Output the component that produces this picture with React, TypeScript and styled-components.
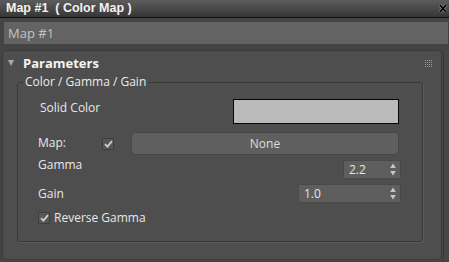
import styled, { createGlobalStyle } from "styled-components";

const GlobalStyle = createGlobalStyle`
  html, body {
    margin: 0;
    padding: 0;
    background: #444444;
  }
  body {
    font-family: "Open Sans", "Liberation Sans", sans-serif;
    font-size: 12px;
    color: #e4e4e4;
  }
`;

const Window = styled.div`
  width: 449px;
  height: 262px;
  display: flex;
  flex-direction: column;
  background: #444444;
  overflow: hidden;
`;

const TitleBar = styled.div`
  height: 17px;
  display: flex;
  align-items: center;
  padding: 0 2px 0 6px;
  background: linear-gradient(#5c5c5c, #363636);
  border-bottom: 1px solid #0e0e0e;
`;

const Title = styled.span`
  font-family: "Liberation Sans", Arial, sans-serif;
  font-weight: 700;
  font-size: 12.5px;
  line-height: 17px;
  color: #f2f2f2;
  white-space: pre;
`;

const CloseBtn = styled.span`
  margin-left: auto;
  display: flex;
  width: 8px;
  height: 9px;
`;

const NameField = styled.div`
  margin: 4px 1px 0 4px;
  height: 22px;
  padding-left: 4px;
  display: flex;
  align-items: center;
  background: #636363;
  font-size: 13px;
  color: #c4c4c4;
`;

const Body = styled.div`
  flex: 1;
  display: flex;
  margin-top: 6px;
`;

const Rollout = styled.div`
  width: 440px;
  margin: 0 0 2px 2px;
  box-sizing: border-box;
  background: #4e4e4e;
  border: 1px solid #3b3b3b;
  border-radius: 4px;
  display: flex;
  flex-direction: column;
`;

const Track = styled.div`
  flex: 1;
  margin-left: 1px;
  border-left: 1px solid #3a3a3a;
  background: #474747;
`;

const Header = styled.div`
  height: 24px;
  display: flex;
  align-items: center;
  padding: 0 9px 0 5px;
`;

const Arrow = styled.span`
  width: 0;
  height: 0;
  border-left: 3.5px solid transparent;
  border-right: 3.5px solid transparent;
  border-top: 6px solid #a8a8a8;
  margin: 0 9px 0 0;
`;

const HeaderTitle = styled.span`
  font-weight: 700;
  font-size: 13px;
  color: #f4f4f4;
`;

const Grip = styled.div`
  margin-left: auto;
  display: grid;
  grid-template-columns: repeat(4, 1px);
  grid-auto-rows: 1px;
  gap: 1px;
  & > i {
    background: #9c9c9c;
  }
`;

const Group = styled.fieldset`
  margin: 0 18px 0 14px;
  padding: 0;
  border: 1px solid #393939;
  border-radius: 3px;
  box-shadow: 1px 1px 0 #5c5c5c;
  min-width: 0;
`;

const Legend = styled.legend`
  margin-left: 5px;
  padding: 0 2px;
  line-height: 14px;
  font-size: 12px;
  color: #ececec;
`;

const GroupBody = styled.div`
  display: flex;
  flex-direction: column;
  padding: 10px 21px 16px 20px;
`;

const Row = styled.div<{ $h: number; $gap?: number }>`
  display: flex;
  align-items: center;
  height: ${(p) => p.$h}px;
  margin-top: ${(p) => p.$gap ?? 0}px;
`;

const Label = styled.span<{ $w?: number; $indent?: number; $top?: number }>`
  width: ${(p) => (p.$w ? `${p.$w}px` : "auto")};
  padding-left: ${(p) => p.$indent ?? 0}px;
  align-self: flex-start;
  margin-top: ${(p) => p.$top ?? 0}px;
  color: #e8e8e8;
  white-space: nowrap;
`;

const Swatch = styled.div`
  margin-left: auto;
  margin-right: 2px;
  width: 166px;
  height: 25px;
  box-sizing: border-box;
  background: #bababa;
  border: 1px solid #050505;
`;

const Check = styled.span`
  width: 12px;
  height: 12px;
  box-sizing: border-box;
  display: inline-flex;
  align-items: center;
  justify-content: center;
  background: #575757;
  border: 1px solid #3e3e3e;
`;

const Button = styled.div`
  margin-left: auto;
  margin-right: 2px;
  width: 268px;
  height: 23px;
  box-sizing: border-box;
  display: flex;
  align-items: center;
  justify-content: center;
  background: #5f5f5f;
  border: 1px solid #474747;
  border-radius: 4px;
  color: #dedede;
`;

const Spinner = styled.div<{ $w: number }>`
  margin-left: auto;
  width: ${(p) => p.$w}px;
  height: 19px;
  box-sizing: border-box;
  display: flex;
  align-items: center;
  padding: 0 4px 0 5px;
  background: #5e5e5e;
  border: 1px solid #494949;
  color: #e6e6e6;
`;

const SpinArrows = styled.svg`
  margin-left: auto;
`;

const CheckLabel = styled.span`
  margin-left: 4px;
  color: #e8e8e8;
`;

const Tick = () => (
  <svg width="9" height="8" viewBox="0 0 9 8">
    <path d="M1 4.2 L3.4 6.6 L8 1.2" fill="none" stroke="#cfcfcf" strokeWidth="1.8" />
  </svg>
);

const Arrows = () => (
  <SpinArrows width="6" height="13" viewBox="0 0 6 13">
    <path d="M3 0.5 L5.8 5 L0.2 5 Z" fill="#c8c8c8" />
    <path d="M3 12.5 L5.8 8 L0.2 8 Z" fill="#c8c8c8" />
  </SpinArrows>
);

export default function App() {
  return (
    <>
      <GlobalStyle />
      <Window>
        <TitleBar>
          <Title>{"Map #1  ( Color Map )"}</Title>
          <CloseBtn>
            <svg width="8" height="9" viewBox="0 0 8 9">
              <path d="M1 1 L7 8 M7 1 L1 8" stroke="#8a8a8a" strokeWidth="3" />
              <path d="M1 1 L7 8 M7 1 L1 8" stroke="#050505" strokeWidth="1.8" />
            </svg>
          </CloseBtn>
        </TitleBar>
        <NameField>Map #1</NameField>
        <Body>
          <Rollout>
            <Header>
              <Arrow />
              <HeaderTitle>Parameters</HeaderTitle>
              <Grip>
                {Array.from({ length: 16 }).map((_, i) => (
                  <i key={i} />
                ))}
              </Grip>
            </Header>
            <Group>
              <Legend>Color / Gamma / Gain</Legend>
              <GroupBody>
                <Row $h={25}>
                  <Label $indent={2}>Solid Color</Label>
                  <Swatch />
                </Row>
                <Row $h={23} $gap={8}>
                  <Label $w={64} $top={2}>Map:</Label>
                  <Check>
                    <Tick />
                  </Check>
                  <Button>None</Button>
                </Row>
                <Row $h={19} $gap={5}>
                  <Label $top={-4}>Gamma</Label>
                  <Spinner $w={58}>
                    2.2
                    <Arrows />
                  </Spinner>
                </Row>
                <Row $h={19} $gap={5}>
                  <Label $top={1}>Gain</Label>
                  <Spinner $w={103}>
                    1.0
                    <Arrows />
                  </Spinner>
                </Row>
                <Row $h={15} $gap={7}>
                  <Check>
                    <Tick />
                  </Check>
                  <CheckLabel>Reverse Gamma</CheckLabel>
                </Row>
              </GroupBody>
            </Group>
          </Rollout>
          <Track />
        </Body>
      </Window>
    </>
  );
}
